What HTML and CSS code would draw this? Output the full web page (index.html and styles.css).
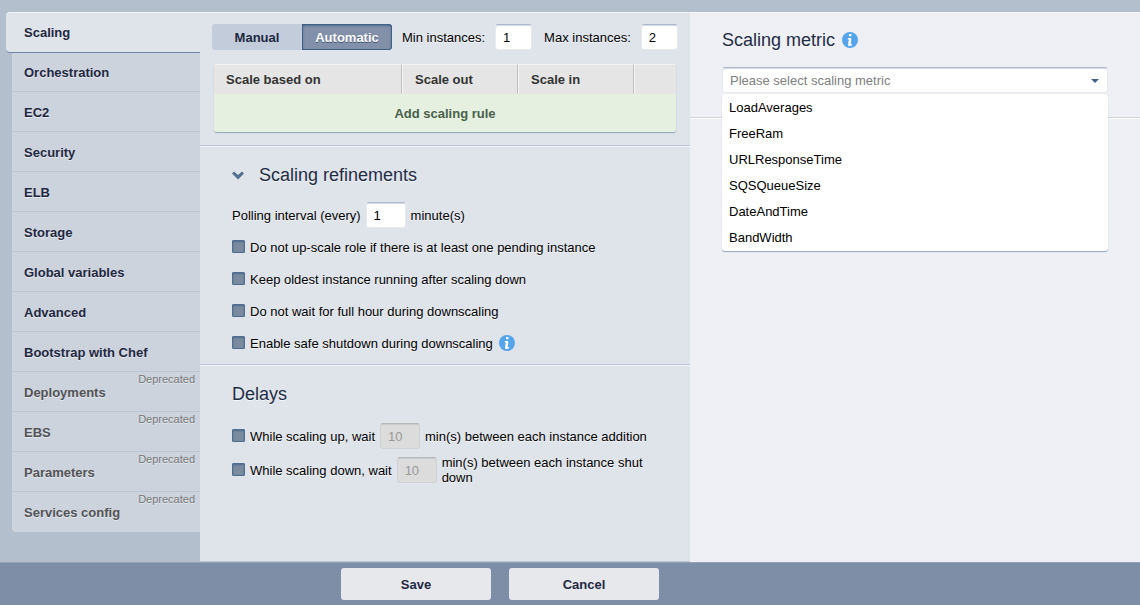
FILE: index.html
```html
<!DOCTYPE html>
<html lang="en">
	<head>
		<meta charset="utf-8">
		<title>Scaling</title>
		<link rel="stylesheet" href="styles.css">
	</head>
	<body>
		<div class="editor">
			<nav class="tabs">
				<a class="tab active" href="#">Scaling</a>
				<div class="tab-list">
					<a class="tab" href="#">Orchestration</a>
					<a class="tab" href="#">EC2</a>
					<a class="tab" href="#">Security</a>
					<a class="tab" href="#">ELB</a>
					<a class="tab" href="#">Storage</a>
					<a class="tab" href="#">Global variables</a>
					<a class="tab" href="#">Advanced</a>
					<a class="tab" href="#">Bootstrap with Chef</a>
					<a class="tab deprecated" href="#">Deployments<span class="note">Deprecated</span></a>
					<a class="tab deprecated" href="#">EBS<span class="note">Deprecated</span></a>
					<a class="tab deprecated" href="#">Parameters<span class="note">Deprecated</span></a>
					<a class="tab deprecated" href="#">Services config<span class="note">Deprecated</span></a>
				</div>
			</nav>

			<main class="settings">
				<section class="section rules">
					<div class="toolbar">
						<div class="switch">
							<button type="button">Manual</button>
							<button type="button" class="pressed">Automatic</button>
						</div>
						<label for="min">Min instances:</label>
						<input class="field" type="text" id="min" value="1">
						<label class="spaced" for="max">Max instances:</label>
						<input class="field" type="text" id="max" value="2">
					</div>
					<table class="grid">
						<thead>
							<tr>
								<th class="col-based">Scale based on</th>
								<th class="col-scale">Scale out</th>
								<th class="col-scale">Scale in</th>
								<th></th>
							</tr>
						</thead>
						<tbody>
							<tr>
								<td colspan="4"><button type="button" class="add">Add scaling rule</button></td>
							</tr>
						</tbody>
					</table>
				</section>

				<section class="section refinements">
					<h2>
						<svg class="chevron" width="12" height="9" viewBox="0 0 12 9"><path d="M0 2.5 2 .5l4 3.6L10 .5l2 2-6 6z" fill="#546f91"/></svg>
						Scaling refinements
					</h2>
					<div class="line polling">
						<label for="polling">Polling interval (every)</label>
						<input class="field" type="text" id="polling" value="1">
						<span>minute(s)</span>
					</div>
					<div class="line">
						<input class="check" type="checkbox" id="pending">
						<label for="pending">Do not up-scale role if there is at least one pending instance</label>
					</div>
					<div class="line">
						<input class="check" type="checkbox" id="oldest">
						<label for="oldest">Keep oldest instance running after scaling down</label>
					</div>
					<div class="line">
						<input class="check" type="checkbox" id="hour">
						<label for="hour">Do not wait for full hour during downscaling</label>
					</div>
					<div class="line">
						<input class="check" type="checkbox" id="safe">
						<label for="safe">Enable safe shutdown during downscaling</label>
						<svg class="info" width="16" height="16" viewBox="0 0 16 16"><circle cx="8" cy="8" r="8" fill="#56a4ec"/><path d="M7 2h2.4v2.2H7zM5.8 6h3.4v3l-.6 3H10v1.2L8 14H6.2v-3L7 7.4H5.8z" fill="#fff"/></svg>
					</div>
				</section>

				<section class="section delays">
					<h2>Delays</h2>
					<div class="line delay">
						<input class="check" type="checkbox" id="up">
						<label for="up">While scaling up, wait</label>
						<input class="field" type="text" aria-label="Minutes after scaling up" value="10" disabled>
						<span>min(s) between each instance addition</span>
					</div>
					<div class="line delay">
						<input class="check" type="checkbox" id="down">
						<label for="down">While scaling down, wait</label>
						<input class="field" type="text" aria-label="Minutes after scaling down" value="10" disabled>
						<span>min(s) between each instance shut down</span>
					</div>
				</section>
			</main>

			<aside class="details">
				<div class="metric">
					<h2>
						<label for="metric">Scaling metric</label>
						<svg class="info" width="16" height="16" viewBox="0 0 16 16"><circle cx="8" cy="8" r="8" fill="#56a4ec"/><path d="M7 2h2.4v2.2H7zM5.8 6h3.4v3l-.6 3H10v1.2L8 14H6.2v-3L7 7.4H5.8z" fill="#fff"/></svg>
					</h2>
					<div class="combo">
						<input class="field" type="text" id="metric" role="combobox" aria-expanded="true" aria-controls="metrics" placeholder="Please select scaling metric">
						<svg class="arrow" width="8" height="4" viewBox="0 0 8 4"><path d="M0 0h8L4 4z" fill="#3f6185"/></svg>
						<ul class="options" id="metrics" role="listbox">
							<li role="option">LoadAverages</li>
							<li role="option">FreeRam</li>
							<li role="option">URLResponseTime</li>
							<li role="option">SQSQueueSize</li>
							<li role="option">DateAndTime</li>
							<li role="option">BandWidth</li>
						</ul>
					</div>
				</div>
			</aside>
		</div>

		<footer class="actions">
			<button type="button">Save</button>
			<button type="button">Cancel</button>
		</footer>
	</body>
</html>
```
FILE: styles.css
```css
* {
	box-sizing: border-box;
}

body {
	margin: 0;
	min-height: 100vh;
	display: flex;
	flex-direction: column;
	background: #b3bfcd;
	color: #000;
	font: 13px/15px "Liberation Sans", Arial, sans-serif;
}

button, input {
	font: inherit;
	color: inherit;
}

button {
	border: 0;
	padding: 0;
	font-weight: bold;
	color: #1f2840;
	cursor: pointer;
}

h2 {
	display: flex;
	align-items: center;
	margin: 0;
	font-size: 18px;
	line-height: 20px;
	font-weight: normal;
	color: #222c45;
	text-shadow: 0 1px #f3f5f8;
}

.editor {
	flex: 1;
	display: flex;
	padding-top: 12px;
}

/* left tabs */
.tabs {
	width: 200px;
	padding-left: 6px;
}

.tab {
	display: flex;
	align-items: center;
	position: relative;
	height: 40px;
	padding: 1px 0 0 12px;
	border-bottom: 1px solid #bdc6d4;
	color: #1f2840;
	font-weight: bold;
	text-decoration: none;
	text-shadow: 0 1px #e3e7ed;
}

.tab.active {
	height: 41px;
	padding: 0 0 0 18px;
	background: #dfe3ea;
	border-top: 1px solid #f3f5f8;
	border-bottom: 1px solid #7189a8;
	border-radius: 4px 0 0 4px;
}

.tab-list {
	margin-left: 6px;
	background: #ccd3dd;
	border-radius: 0 0 0 4px;
}

.tab:last-child {
	border-bottom: 0;
}

.tab-list .tab:first-child {
	height: 39px;
}

.tab.deprecated {
	color: #525356;
}

.note {
	position: absolute;
	top: 0;
	right: 5px;
	font-size: 11px;
	font-weight: normal;
	color: #777;
}

/* middle column */
.settings {
	width: 490px;
	display: flex;
	flex-direction: column;
	background: #dfe3ea;
	border-bottom: 1px solid #bdc6d8;
}

.section {
	border-top: 1px solid #f3f5f8;
	border-bottom: 1px solid #bdc6d8;
	text-shadow: 0 1px #f3f5f8;
}

.section:last-child {
	border-bottom: 0;
}

.rules {
	padding: 11px 12px 13px;
}

.toolbar {
	display: flex;
	align-items: center;
	gap: 10px;
}

.toolbar .spaced {
	margin-left: 2px;
}

.toolbar .field {
	width: 37px;
}

.switch {
	display: flex;
	width: 180px;
	height: 26px;
	border-radius: 3px;
	overflow: hidden;
}

.switch button {
	flex: 1;
	background: #c2ccdb;
}

.switch .pressed {
	background: #8290aa;
	color: #fff;
	text-shadow: 0 1px #3f5878;
	border-radius: 0 3px 3px 0;
	box-shadow: inset 0 0 0 1px #3f6185, inset 0 1px 3px #244a70;
}

.field {
	height: 26px;
	padding: 0 7px;
	background: #fff;
	border: 1px solid #e6e9ee;
	border-top-color: #acb9cc;
	border-radius: 3px;
	box-shadow: inset 0 1px #d5dbe5;
}

.field:disabled {
	background: #dcdcdc;
	border-color: #b5b7b9 #cfd2d5 #cfd2d5;
	box-shadow: inset 0 1px #cbcccd;
	color: #999;
	opacity: 1;
}

.grid {
	width: calc(100% - 4px);
	margin: 14px 2px 0;
	table-layout: fixed;
	border-spacing: 0;
	border-radius: 3px;
	background: #e6f0e1;
	box-shadow: 0 1px 1px #8ba1b9;
	overflow: hidden;
	text-shadow: none;
}

.grid th {
	height: 30px;
	padding: 0 12px;
	background: #e5e5e5;
	border-top: 1px solid #f5f5f5;
	border-left: 1px solid #f5f5f5;
	border-right: 1px solid #bfbfbf;
	color: #333;
	text-align: left;
}

.grid th:first-child {
	border-left: 0;
}

.grid th:last-child {
	border-right: 0;
}

.col-based {
	width: 188px;
}

.col-scale {
	width: 116px;
}

.grid td {
	padding: 0;
}

.add {
	display: block;
	width: 100%;
	height: 38px;
	background: #e6f0e1;
	color: #48604a;
}

.refinements {
	padding: 18px 32px 5px;
}

.chevron {
	margin-right: 15px;
}

.line {
	display: flex;
	align-items: center;
	gap: 5px;
	min-height: 32px;
}

.line .field {
	width: 40px;
	flex: none;
}

.line label {
	flex: none;
}

.polling {
	margin-top: 14px;
}

.check {
	appearance: none;
	flex: none;
	width: 13px;
	height: 13px;
	margin: 0 0 1px;
	background: #7b8c9f;
	border: 1px solid #4f6d8f;
	border-radius: 1px;
	box-shadow: inset 0 1px 2px #4f6d8f;
}

.line .info {
	margin-left: 1px;
	flex: none;
}

.delays {
	flex: 1;
	padding: 18px 32px;
}

.delays h2 {
	margin-bottom: 15px;
}

.delay {
	min-height: 34px;
}

/* right column */
.details {
	flex: 1;
	background: #eff0f5;
	border-top: 1px solid #fafbfc;
}

.metric {
	padding: 17px 32px 24px;
	border-bottom: 1px solid #cdd3dd;
	box-shadow: 0 1px #fff;
}

.metric .info {
	margin-left: 7px;
}

.combo {
	position: relative;
	margin-top: 17px;
}

.combo .field {
	display: block;
	width: 100%;
}

.combo .field::placeholder {
	color: #808080;
}

.arrow {
	position: absolute;
	top: 12px;
	right: 9px;
}

.options {
	position: absolute;
	top: 27px;
	left: 0;
	right: 0;
	margin: 0;
	padding: 1px 0 0;
	list-style: none;
	background: #fff;
	border-radius: 3px;
	box-shadow: 0 1px 1px #94a8be;
}

.options li {
	padding: 0 7px;
	line-height: 26px;
}

/* bottom bar */
.actions {
	display: flex;
	justify-content: center;
	gap: 18px;
	padding: 5px 140px 5px 0;
	background: #7e8ea7;
	border-top: 1px solid #93a3b8;
}

.actions button {
	width: 150px;
	height: 32px;
	background: #e6e8ec;
	border-radius: 3px;
}
```
